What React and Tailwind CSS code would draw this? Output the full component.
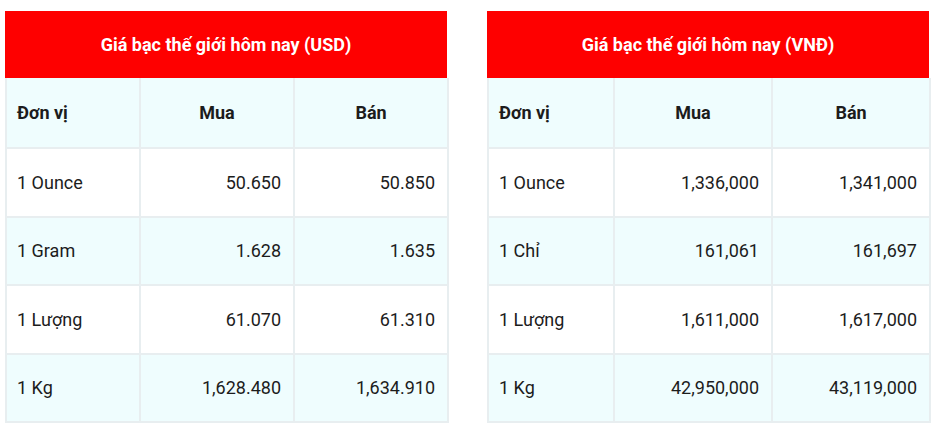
const TABLES = [
  {
    title: 'Giá bạc thế giới hôm nay (USD)',
    cols: ['w-[134px]', 'w-[154px]', 'w-[154px]'],
    rows: [
      ['1 Ounce', '50.650', '50.850'],
      ['1 Gram', '1.628', '1.635'],
      ['1 Lượng', '61.070', '61.310'],
      ['1 Kg', '1,628.480', '1,634.910'],
    ],
  },
  {
    title: 'Giá bạc thế giới hôm nay (VNĐ)',
    cols: ['w-[126px]', 'w-[158px]', 'w-[158px]'],
    rows: [
      ['1 Ounce', '1,336,000', '1,341,000'],
      ['1 Chỉ', '161,061', '161,697'],
      ['1 Lượng', '1,611,000', '1,617,000'],
      ['1 Kg', '42,950,000', '43,119,000'],
    ],
  },
]

function PriceTable({ table }) {
  return (
    <div className="w-[442px] shrink-0">
      <div className="h-[67px] bg-[#fe0000] flex items-center justify-center text-white font-bold text-[18px]">
        {table.title}
      </div>
      <table className="w-full table-fixed border-collapse text-[18px] text-[#1c1c1c]">
        <colgroup>
          {table.cols.map((c, i) => (
            <col key={i} className={c} />
          ))}
        </colgroup>
        <thead>
          <tr className="h-[70px] bg-[#effdfe] font-bold">
            <th className="border-2 border-t-0 border-[#e8eef0] text-left pl-[10px]">Đơn vị</th>
            <th className="border-2 border-t-0 border-[#e8eef0] text-center">Mua</th>
            <th className="border-2 border-t-0 border-[#e8eef0] text-center">Bán</th>
          </tr>
        </thead>
        <tbody>
          {table.rows.map((r, i) => (
            <tr key={i} className={`h-[68.5px] ${i % 2 === 1 ? 'bg-[#effdfe]' : 'bg-white'}`}>
              <td className="border-2 border-[#e8eef0] pl-[10px]">{r[0]}</td>
              <td className="border-2 border-[#e8eef0] text-right pr-3">{r[1]}</td>
              <td className="border-2 border-[#e8eef0] text-right pr-3">{r[2]}</td>
            </tr>
          ))}
        </tbody>
      </table>
    </div>
  )
}

export default function App() {
  return (
    <div className="w-[943px] h-[432px] bg-white overflow-hidden pt-[11px] pl-[5px] flex gap-[40px] font-['Roboto',sans-serif]">
      {TABLES.map((t) => (
        <PriceTable key={t.title} table={t} />
      ))}
    </div>
  )
}
